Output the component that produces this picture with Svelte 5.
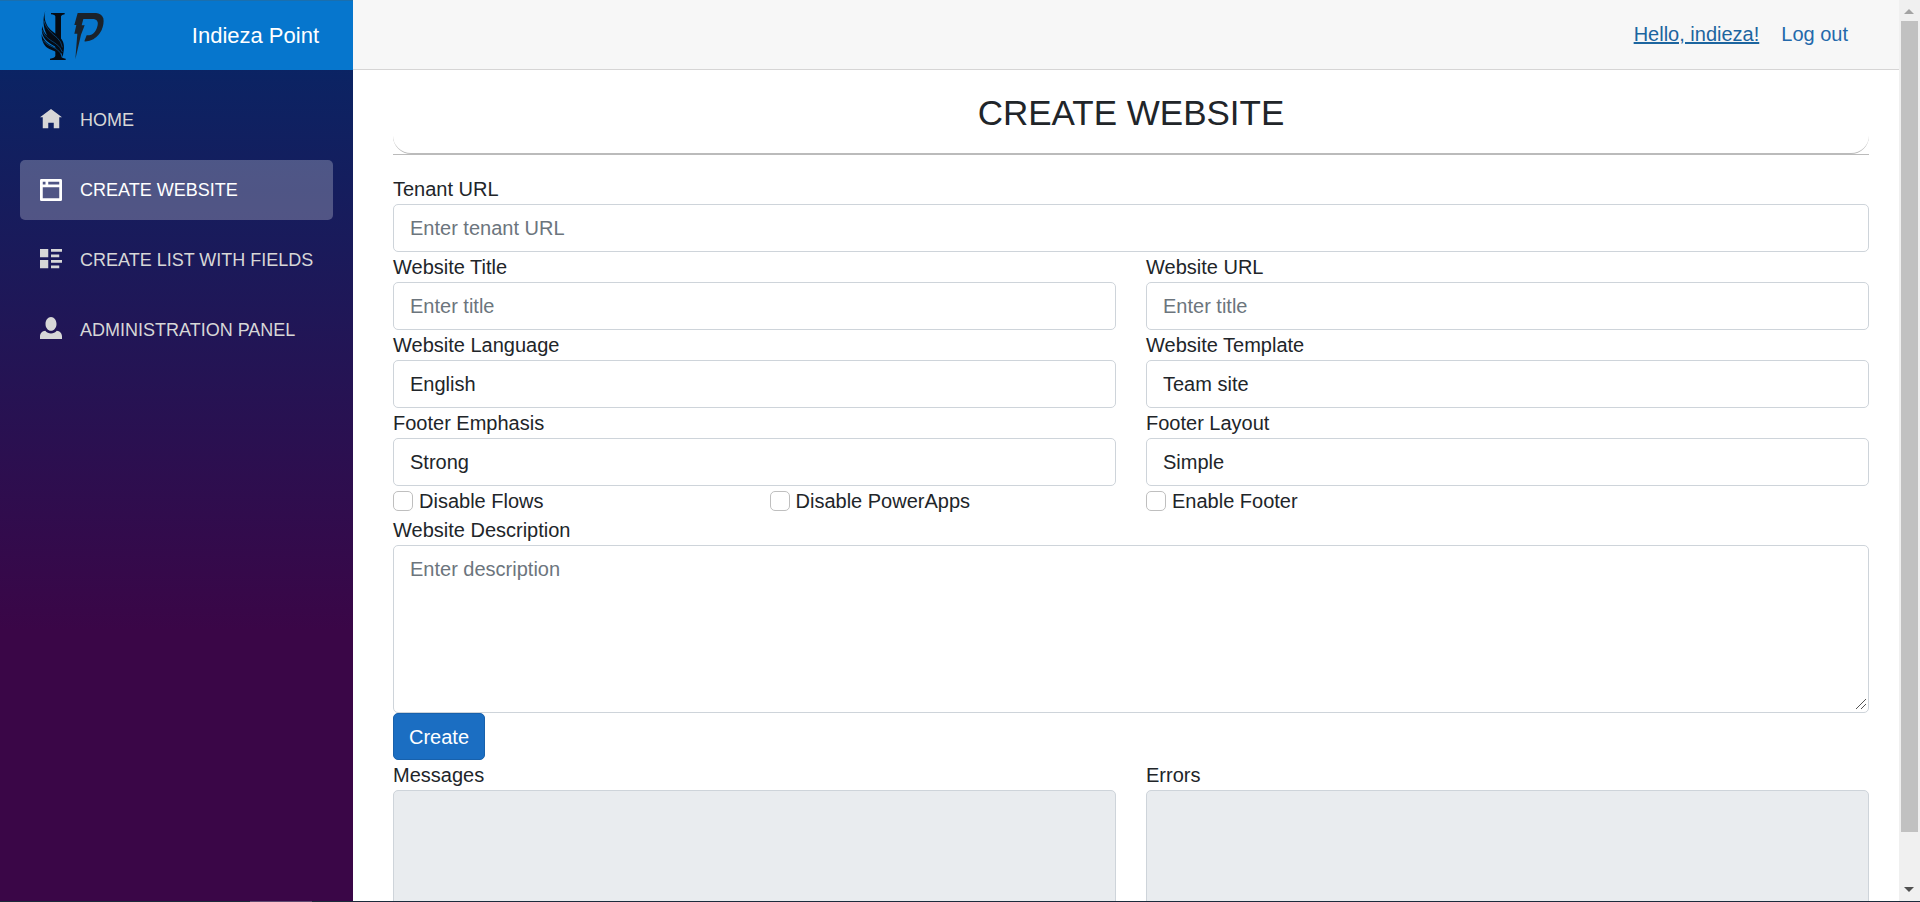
<script>
  const nav = [
    {
      label: 'HOME',
      path: 'M4 0l-4 3h1v4h2v-2h2v2h2v-4.03l1 .03-4-3z'
    },
    {
      label: 'CREATE WEBSITE',
      active: true,
      path: 'M.34 0a.5.5 0 0 0-.34.5v7a.5.5 0 0 0 .5.5h7a.5.5 0 0 0 .5-.5v-7a.5.5 0 0 0-.5-.5h-7.16zm.66 1h1v1h-1v-1zm2 0h4v1h-4v-1zm-2 2h6v4h-6v-4z'
    },
    {
      label: 'CREATE LIST WITH FIELDS',
      path: 'M0 0v3h3v-3h-3zm4 0v1h4v-1h-4zm0 2v1h3v-1h-3zm-4 2v3h3v-3h-3zm4 0v1h4v-1h-4zm0 2v1h3v-1h-3z'
    },
    {
      label: 'ADMINISTRATION PANEL',
      path: 'M4 -.7c-1.1 0-2 1.12-2 2.5s.9 2.5 2 2.5 2-1.12 2-2.5-.9-2.5-2-2.5zm-2.09 5c-1.06.05-1.91.92-1.91 2v1h8v-1c0-1.08-.84-1.95-1.91-2-.54.61-1.28 1-2.09 1-.81 0-1.55-.39-2.09-1z'
    }
  ];
</script>

<div class="page">
  <aside class="sidebar">
    <div class="brand">
      <svg class="logo" viewBox="30 30 198 156" aria-hidden="true">
        <g fill="#050b14">
          <path d="M63 39H104V43Q94 44 93 49V168Q94 174 107 176V180H60V176Q74 175 76 168V49Q75 44 63 43Z" />
          <path
            d="M46 32C41 50 45 69 57 84C68 98 91 106 99 125C105 140 100 158 98 171C94 151 80 142 66 134C44 121 31 104 37 78C39 91 43 99 52 107C39 84 37 57 46 32Z"
          />
          <path d="M35 102C39 121 53 132 70 140C84 147 93 158 97 172C81 152 67 153 53 144C41 136 34 121 35 102Z" />
        </g>
        <path
          d="M42 62C48 87 67 101 81 113Q94 124 97 142M37 91C44 113 65 122 79 132Q91 141 97 156M40 122C50 137 71 140 82 149Q91 156 96 169"
          fill="none"
          stroke="#0675cb"
          stroke-width="1.5"
        />
        <path
          d="M143 39H198Q214 40 220 55Q223 70 215 90Q206 108 190 118Q178 125 163 124L170 106H178Q190 105 198 90Q205 75 203 66Q201 58 192 57H160L155 76H164L153 104L136 178L142 101H133L139 75H133Z"
          fill="#1b222a"
        />
      </svg>
      <a class="name" href="#home">Indieza Point</a>
    </div>
    <nav>
      {#each nav as item}
        <a href="#top" class:active={item.active} aria-current={item.active ? 'page' : undefined}>
          <svg viewBox="0 0 8 8" aria-hidden="true"><path d={item.path} /></svg>
          <span>{item.label}</span>
        </a>
      {/each}
    </nav>
  </aside>

  <main>
    <header>
      <a class="user" href="#account">Hello, indieza!</a>
      <a href="#logout">Log out</a>
    </header>

    <section>
      <h1>CREATE WEBSITE</h1>
      <hr />
      <form>
        <div class="full">
          <label for="tenant">Tenant URL</label>
          <input class="control" id="tenant" type="text" placeholder="Enter tenant URL" />
        </div>
        <div class="half">
          <label for="title">Website Title</label>
          <input class="control" id="title" type="text" placeholder="Enter title" />
        </div>
        <div class="half">
          <label for="url">Website URL</label>
          <input class="control" id="url" type="text" placeholder="Enter title" />
        </div>
        <div class="half">
          <label for="language">Website Language</label>
          <select class="control" id="language"><option>English</option></select>
        </div>
        <div class="half">
          <label for="template">Website Template</label>
          <select class="control" id="template"><option>Team site</option></select>
        </div>
        <div class="half">
          <label for="emphasis">Footer Emphasis</label>
          <select class="control" id="emphasis"><option>Strong</option></select>
        </div>
        <div class="half">
          <label for="layout">Footer Layout</label>
          <select class="control" id="layout"><option>Simple</option></select>
        </div>
        <label class="check"><input type="checkbox" />Disable Flows</label>
        <label class="check"><input type="checkbox" />Disable PowerApps</label>
        <label class="check"><input type="checkbox" />Enable Footer</label>
        <div class="full">
          <label for="description">Website Description</label>
          <textarea class="control description" id="description" placeholder="Enter description"></textarea>
        </div>
        <div class="full">
          <button type="button">Create</button>
        </div>
        <div class="half">
          <label for="messages">Messages</label>
          <textarea class="control log" id="messages" disabled></textarea>
        </div>
        <div class="half">
          <label for="errors">Errors</label>
          <textarea class="control log" id="errors" disabled></textarea>
        </div>
      </form>
    </section>
  </main>

  <div class="scrollbar" aria-hidden="true">
    <svg viewBox="0 0 21 21"><path d="M5 14h10l-5-5z" fill="#a3a3a3" /></svg>
    <div class="thumb"></div>
    <div class="rest"></div>
    <svg viewBox="0 0 21 21"><path d="M5 7h10l-5 5z" fill="#505050" /></svg>
  </div>
</div>
<footer><span></span></footer>

<style>
  :global(body) {
    margin: 0;
    overflow: hidden;
  }
  :global(#app) {
    display: flex;
    flex-direction: column;
    height: 100vh;
  }
  .page,
  .page * {
    box-sizing: border-box;
  }
  .page {
    flex: 1;
    min-height: 0;
    display: grid;
    grid-template-columns: 353px minmax(0, 1fr) 21px;
    grid-template-rows: minmax(0, 1fr);
    font: 20px/30px 'Liberation Sans', Arial, sans-serif;
    color: #212529;
    background: #fff;
  }
  .sidebar {
    background: linear-gradient(180deg, #052767 0%, #3a0647 70%);
  }
  .brand {
    display: flex;
    align-items: center;
    justify-content: space-between;
    height: 70px;
    padding: 0 34px 0 40px;
    background: #0676cd;
    border-top: 1px solid #1a6fae;
  }
  .logo {
    width: 66px;
    height: 52px;
  }
  .name {
    color: #fff;
    font-size: 22px;
    text-decoration: none;
  }
  nav {
    display: flex;
    flex-direction: column;
    gap: 10px;
    padding: 20px;
  }
  nav a {
    display: flex;
    align-items: center;
    gap: 18px;
    height: 60px;
    padding: 0 20px;
    border-radius: 5px;
    color: #d7d7d7;
    font-size: 18px;
    text-decoration: none;
    white-space: nowrap;
  }
  nav a.active {
    color: #fff;
    background: rgba(255, 255, 255, 0.25);
  }
  nav svg {
    flex: none;
    width: 22px;
    height: 22px;
    fill: currentColor;
    overflow: visible;
  }
  main {
    overflow: hidden;
  }
  header {
    display: flex;
    align-items: center;
    justify-content: flex-end;
    gap: 22px;
    height: 70px;
    padding: 0 51px 2px 0;
    background: #f7f7f7;
    border-bottom: 1px solid #d6d5d5;
  }
  header a {
    color: #2469ab;
    text-decoration: none;
  }
  header .user {
    color: #1c659f;
    text-decoration: underline;
  }
  section {
    padding: 22px 30px 0 40px;
  }
  h1 {
    margin: 0;
    height: 62px;
    font-size: 35px;
    line-height: 42px;
    font-weight: 400;
    text-align: center;
    border-bottom: 1px solid #bbb;
    border-radius: 18px;
  }
  hr {
    margin: 0 0 19px;
    border: 0;
    border-top: 1px solid #bbb;
  }
  form {
    display: grid;
    grid-template-columns: repeat(4, minmax(0, 1fr));
    column-gap: 30px;
  }
  .full {
    grid-column: span 4;
  }
  .half {
    grid-column: span 2;
  }
  label {
    display: block;
  }
  .control {
    display: block;
    width: 100%;
    height: 48px;
    margin: 0;
    padding: 8px 16px;
    font: inherit;
    color: #212529;
    background: #fff;
    border: 1px solid #ced4da;
    border-radius: 5px;
    appearance: none;
  }
  .control::placeholder {
    color: #6c757d;
    opacity: 1;
  }
  .description {
    height: 168px;
    resize: vertical;
  }
  .description::-webkit-resizer {
    background: linear-gradient(
        135deg,
        transparent 46%,
        #555 46%,
        #555 53%,
        transparent 53%,
        transparent 72%,
        #555 72%,
        #555 79%,
        transparent 79%
      )
      3px 2px / 10px 10px no-repeat;
  }
  .log {
    height: 168px;
    background: #e9ecef;
    resize: none;
  }
  .check {
    display: flex;
    align-items: center;
    gap: 6px;
    height: 29px;
  }
  .check input {
    width: 20px;
    height: 20px;
    margin: 0;
    appearance: none;
    background: #fff;
    border: 1px solid #bfbfbf;
    border-radius: 5px;
  }
  .check input:checked {
    background: #1b6ec2;
  }
  button {
    display: block;
    height: 47px;
    padding: 0 15px;
    font: inherit;
    color: #fff;
    background: #1b6ec2;
    border: 1px solid #1861ac;
    border-radius: 5px;
  }
  .scrollbar {
    display: flex;
    flex-direction: column;
    background: #f0f0f0;
  }
  .scrollbar svg {
    flex: none;
    width: 21px;
    height: 21px;
  }
  .thumb {
    flex: 17;
    margin: 0 2px;
    background: #c1c1c1;
  }
  .rest {
    flex: 1;
  }
  footer {
    display: flex;
    height: 1px;
    background: #1c2b3c;
  }
  footer span {
    width: 62px;
    margin-left: 250px;
    background: #5d4a70;
  }
</style>
